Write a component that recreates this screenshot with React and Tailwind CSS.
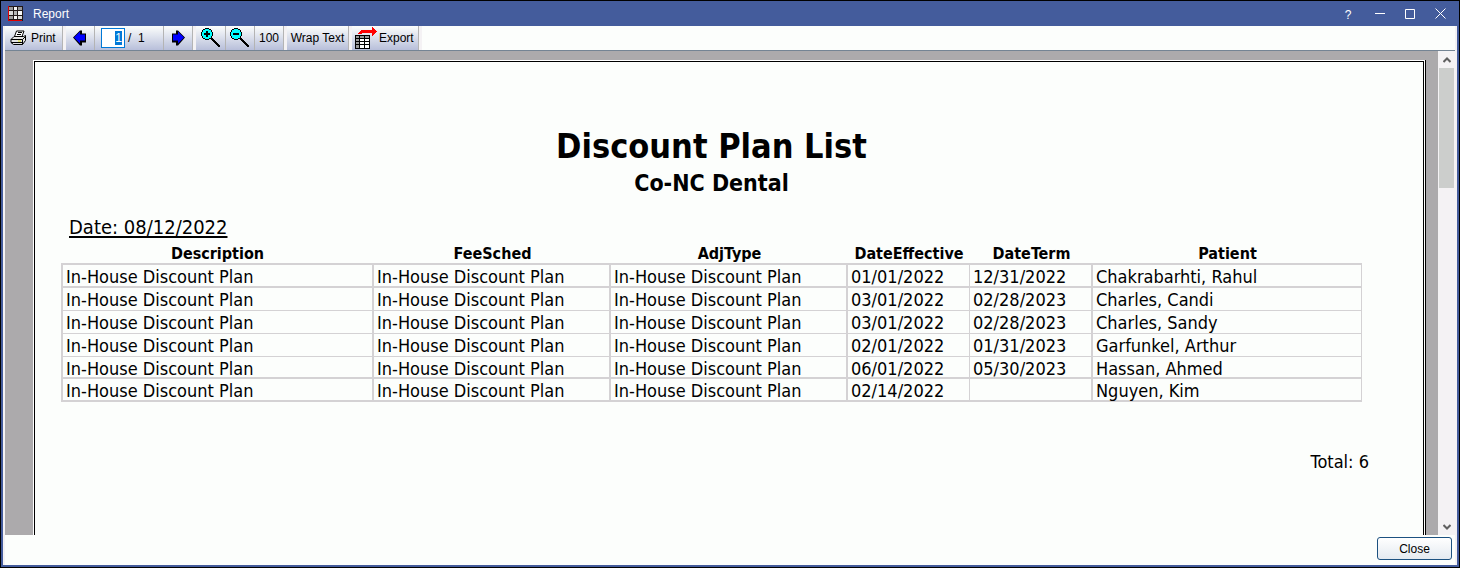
import React, { useEffect, useRef, useState } from "react";

const columns = [
  { key: "description", label: "Description", width: "w-[313px]" },
  { key: "feeSched", label: "FeeSched", width: "w-[237px]" },
  { key: "adjType", label: "AdjType", width: "w-[237px]" },
  { key: "effective", label: "DateEffective", width: "w-[122px]" },
  { key: "term", label: "DateTerm", width: "w-[123px]" },
  { key: "patient", label: "Patient", width: "" },
];

const plan = "In-House Discount Plan";

const rows = [
  { effective: "01/01/2022", term: "12/31/2022", patient: "Chakrabarhti, Rahul" },
  { effective: "03/01/2022", term: "02/28/2023", patient: "Charles, Candi" },
  { effective: "03/01/2022", term: "02/28/2023", patient: "Charles, Sandy" },
  { effective: "02/01/2022", term: "01/31/2023", patient: "Garfunkel, Arthur" },
  { effective: "06/01/2022", term: "05/30/2023", patient: "Hassan, Ahmed" },
  { effective: "02/14/2022", term: "", patient: "Nguyen, Kim" },
].map(row => ({ description: plan, feeSched: plan, adjType: plan, ...row }));

const AppIcon = () => (
  <svg width="15" height="15" viewBox="0 0 15 15" shapeRendering="crispEdges" aria-hidden="true">
    <rect width="15" height="15" fill="#201818" />
    <path d="M1 1h4v3h-4zM10 1h4v3h-4zM1 10h4v3h-4z" fill="#9a9a9a" />
    <path d="M6 1h3v3h-3zM10 5h4v4h-4zM6 10h3v3h-3z" fill="#f8f8f8" />
    <path d="M1 5h4v4h-4zM10 10h4v3h-4z" fill="#d8d8d8" />
    <path d="M6 5h3v4h-3z" fill="#b4b4b4" />
    <path d="M0 0h1v14h13v1h-14z" fill="#e00000" />
  </svg>
);

const PrintIcon = () => (
  <svg width="17" height="16" viewBox="0 0 17 16" aria-hidden="true">
    <path d="M4.500 6.500l2-5.500h7.500l-2 5.500z" fill="#fff" stroke="#000" />
    <path d="M8 2.500h4M7 4.500h4" stroke="#000" />
    <path d="M1 9.500l3-3h9.500l2-1v5l-3 4h-9l-2.500-2z" fill="#e4e4e4" stroke="#000" />
    <path d="M1 9.500h11.500l3-3M12.500 9.500v5" fill="none" stroke="#000" />
    <path d="M1 12.500h11" stroke="#000" />
    <path d="M8 11h3" stroke="#dede00" />
  </svg>
);

const ArrowIcon = ({ flip }) => (
  <svg width="14" height="16" viewBox="0 0 14 16" className={flip ? "-scale-x-100" : ""} aria-hidden="true">
    <path d="M0 7.500L7 .5h2v3h4v9h-4v3h-2z" fill="#000" />
    <path d="M1 7.500L7 1.500v3h5v6h-5v3z" fill="#0000ff" />
  </svg>
);

const ZoomIcon = ({ plus }) => (
  <svg width="20" height="20" viewBox="0 0 20 20" shapeRendering="crispEdges" aria-hidden="true">
    <path d="M4 0h4v1h2v1h1v2h1v4h-1v2h-1v1h-2v1h-4v-1h-2v-1h-1v-2h-1v-4h1v-2h1v-1h2z" fill="#000" />
    <path d="M4 1h4v1h2v2h1v4h-1v2h-2v1h-4v-1h-2v-2h-1v-4h1v-2h2z" fill="#00ffff" />
    <path d="M3 5h6v2h-6z" fill="#000" />
    {plus && <path d="M5 3h2v6h-2z" fill="#000" />}
    <path d="M10 10h2v1h1v1h1v1h1v1h1v1h1v1h1v1h1v2h-2v-1h-1v-1h-1v-1h-1v-1h-1v-1h-1v-1h-1v-1h-1z" fill="#000" />
  </svg>
);

const ExportIcon = () => (
  <svg width="22" height="22" viewBox="0 0 22 22" shapeRendering="crispEdges" aria-hidden="true">
    <path d="M0 8h15v14h-15z" fill="#000" />
    <path d="M1 9h3v2h-3zM5 9h4v2h-4zM10 9h4v2h-4zM1 12h3v2h-3zM1 15h3v2h-3zM1 18h3v3h-3z" fill="#999" />
    <path d="M5 12h4v2h-4zM10 12h4v2h-4zM5 15h4v2h-4zM10 15h4v2h-4zM5 18h4v3h-4zM10 18h4v3h-4z" fill="#fff" />
    <path d="M3 7v-1h1v-1h1v-1h1v-1h11v-3h1v1h1v1h1v1h1v1h1v1h-1v1h-1v1h-1v1h-1v1h-1v-3h-10v1z" fill="#ff0000" />
  </svg>
);

const ToolButton = ({ label, className, children, ...rest }) => (
  <button
    type="button"
    aria-label={label}
    className={`flex h-full items-center border-r border-[#b4b4b4] bg-linear-to-b from-[#fcfefc] to-[#b8bfda] ${className}`}
    {...rest}
  >
    {children}
  </button>
);

const TitleBar = () => (
  <header className="flex h-[25px] shrink-0 items-center bg-[#445c9c] pl-[7px] text-xs text-white">
    <AppIcon />
    <h1 className="ml-2.5 grow text-[12px]">Report</h1>
    <button type="button" aria-label="Help" className="w-8 pt-0.5 text-center">?</button>
    <button type="button" aria-label="Minimize" className="flex w-8 justify-center">
      <svg width="10" height="11" viewBox="0 0 10 11"><path d="M0 5.500h10" stroke="#fff" /></svg>
    </button>
    <button type="button" aria-label="Maximize" className="flex w-7 justify-center">
      <svg width="10" height="10" viewBox="0 0 10 10"><path d="M.5.5h9v9h-9z" fill="none" stroke="#fff" /></svg>
    </button>
    <button type="button" aria-label="Close window" className="mr-[3px] flex w-8 justify-center">
      <svg width="11" height="11" viewBox="0 0 11 11"><path d="M.5.5l10 10M10.500.5l-10 10" fill="none" stroke="#fff" /></svg>
    </button>
  </header>
);

const Toolbar = () => {
  const [page, setPage] = useState("1");
  const pageRef = useRef(null);

  useEffect(() => {
    pageRef.current.focus();
    pageRef.current.select();
  }, []);

  return (
    <div role="toolbar" className="flex h-[25px] shrink-0 border-b border-[#748494] bg-[#fcfefc] text-[12px] text-black">
      <div className="flex gap-[3px] bg-[#f4f2f4] pr-[3px]">
        <ToolButton className="w-[58px] gap-1 pl-[5px]">
          <PrintIcon />
          Print
        </ToolButton>
        <div className="flex">
          <ToolButton label="Previous page" className="w-[29px] justify-center">
            <ArrowIcon />
          </ToolButton>
          <div className="flex w-[69px] items-center border-r border-[#b4b4b4] bg-linear-to-b from-[#fcfefc] to-[#b8bfda] pl-1.5">
            <input
              ref={pageRef}
              aria-label="Page"
              value={page}
              onChange={e => setPage(e.target.value)}
              className="h-5 w-6 border border-[#0078d7] bg-white pr-0.5 text-right outline-none selection:bg-[#0078d7] selection:text-white"
            />
            <span className="ml-[3px]">/&nbsp; 1</span>
          </div>
          <ToolButton label="Next page" className="w-[29px] justify-center">
            <ArrowIcon flip />
          </ToolButton>
        </div>
        <div className="flex">
          <ToolButton label="Zoom in" className="w-[30px] justify-center">
            <ZoomIcon plus />
          </ToolButton>
          <ToolButton label="Zoom out" className="w-[29px] justify-center">
            <ZoomIcon />
          </ToolButton>
          <ToolButton className="w-[29px] justify-center">100</ToolButton>
        </div>
        <ToolButton className="w-[62px] justify-center whitespace-nowrap">Wrap Text</ToolButton>
        <ToolButton className="w-[67px] gap-0.5 pl-[3px]">
          <ExportIcon />
          Export
        </ToolButton>
      </div>
    </div>
  );
};

const ReportTable = () => (
  <table className="w-full table-fixed border-separate border-spacing-0 text-[18px] leading-4">
    <thead>
      <tr>
        {columns.map(col => (
          <th key={col.key} className={`border-b-2 border-[#d4d2d4] p-0 text-[16px] leading-[19px] font-bold ${col.width}`}>
            {col.label}
          </th>
        ))}
      </tr>
    </thead>
    <tbody>
      {rows.map((row, i) => (
        <tr key={i}>
          {columns.map((col, c) => (
            <td
              key={col.key}
              className={[
                "border-[#d4d2d4] p-0 pt-1 pl-[3px] align-top whitespace-nowrap",
                i === 4 ? "h-[22px]" : "h-[23px]",
                c === 0 ? "border-l-2" : "",
                c === 3 || c === 5 ? "border-r" : "border-r-2",
                i === 0 || i > 3 ? "border-b-2" : "border-b",
              ].join(" ")}
            >
              {row[col.key]}
            </td>
          ))}
        </tr>
      ))}
    </tbody>
  </table>
);

const ScrollBar = () => (
  <div className="flex w-[17px] shrink-0 flex-col items-center bg-[#f4f2f4]">
    <button type="button" aria-label="Scroll up" className="flex h-[17px] w-full items-center justify-center">
      <svg width="8" height="6" viewBox="0 0 8 6"><path d="M.5 5L4 1.500L7.500 5" fill="none" stroke="#606060" strokeWidth="2" /></svg>
    </button>
    <div className="h-[120px] w-[15px] bg-[#cccecc]" />
    <button type="button" aria-label="Scroll down" className="mt-auto flex h-[17px] w-full items-center justify-center">
      <svg width="8" height="6" viewBox="0 0 8 6"><path d="M.5 1L4 4.500L7.500 1" fill="none" stroke="#606060" strokeWidth="2" /></svg>
    </button>
  </div>
);

const App = () => {
  return (
    <div className="flex h-screen flex-col border border-black bg-[#fcfefc] font-['Liberation_Sans',Arial,sans-serif] text-black">
      <TitleBar />
      <div className="flex min-h-0 grow flex-col border-x-2 border-b-2 border-[#445c9c]">
        <div className="flex min-h-0 grow flex-col border-x-2 border-[#f4f2f4]">
          <Toolbar />
          <main className="flex min-h-0 grow">
            <div className="grow overflow-hidden bg-[#acaaac] pt-[9px] pr-3 pl-7">
              <div className="h-[1100px] border-r border-black bg-white pt-px pr-px pl-px">
                <article className="h-full border border-black bg-[#fcfefc] pt-16 pr-[61px] pl-[26px] font-['DejaVu_Sans_Condensed','DejaVu_Sans',sans-serif] [font-stretch:condensed]">
                  <h2 className="text-center text-[34px] leading-10 font-bold">Discount Plan List</h2>
                  <h3 className="mt-[3px] text-center text-[23px] leading-7 font-bold">Co-NC Dental</h3>
                  <p className="mt-4 mb-[3px] pl-2 text-[20px] leading-7 underline underline-offset-2">Date: 08/12/2022</p>
                  <ReportTable />
                  <p className="mt-12 -mr-[7px] text-right text-[18px] leading-6">Total: 6</p>
                </article>
              </div>
            </div>
            <ScrollBar />
          </main>
          <footer className="flex h-[30px] shrink-0 items-start justify-end pt-0.5 pr-[3px]">
            <button
              type="button"
              className="h-[23px] w-[75px] rounded-[3px] border border-[#1c5180] bg-linear-to-b from-white to-[#e4eaf0] text-[12px]"
            >
              Close
            </button>
          </footer>
        </div>
      </div>
    </div>
  );
};

export default App;
